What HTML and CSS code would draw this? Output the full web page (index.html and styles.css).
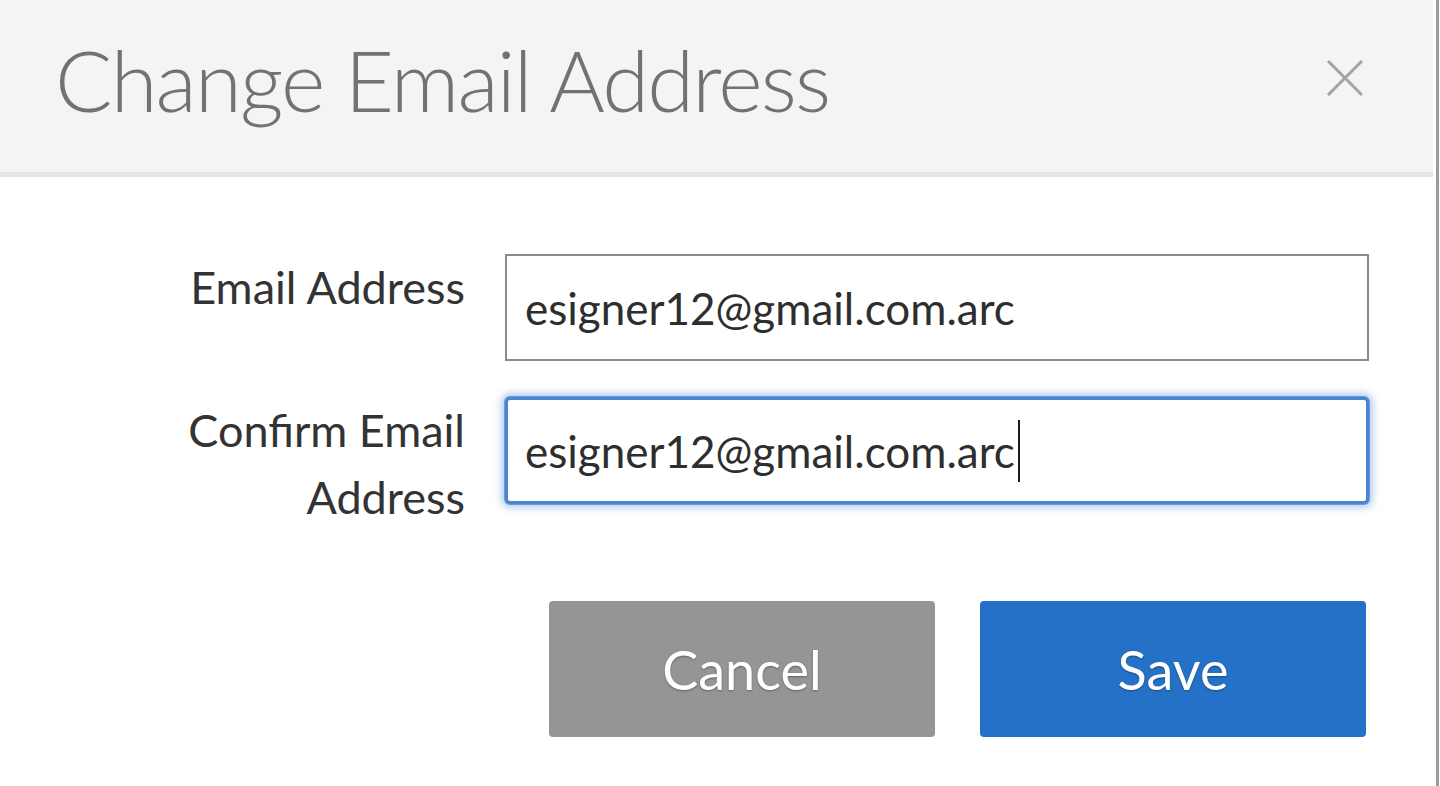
FILE: index.html
```html
<!DOCTYPE html>
<html lang="en">
<head>
<meta charset="utf-8">
<title>Change Email Address</title>
<link rel="stylesheet" href="styles.css">
</head>
<body>
<div class="dialog">
  <header class="dialog-header">
    <h1 class="dialog-title">Change Email Address</h1>
    <button class="close-btn" aria-label="Close">
      <svg viewBox="0 0 36 36" width="36" height="36" aria-hidden="true">
        <path d="M1 1 L35 35 M35 1 L1 35" stroke="#a3a3a3" stroke-width="3" fill="none"/>
      </svg>
    </button>
  </header>
  <div class="dialog-body">
    <div class="form-grid">
      <label class="field-label">Email Address</label>
      <div class="field">esigner12@gmail.com.arc</div>
      <label class="field-label">Confirm Email<br>Address</label>
      <div class="field field-focus">esigner12@gmail.com.arc<span class="caret"></span></div>
    </div>
    <div class="actions">
      <button class="btn btn-cancel">Cancel</button>
      <button class="btn btn-save">Save</button>
    </div>
  </div>
</div>
</body>
</html>
```
FILE: styles.css
```css
html, body {
  margin: 0;
  padding: 0;
  background: #ffffff;
}
body {
  width: 1440px;
  height: 786px;
  overflow: hidden;
  font-family: Lato, "Open Sans", "Liberation Sans", sans-serif;
}
.dialog {
  width: 1436px;
  height: 786px;
  border-right: 3px solid #9c9c9c;
  background: #fff;
  display: flex;
  flex-direction: column;
}
.dialog-header {
  height: 177px;
  box-sizing: border-box;
  margin-right: 3px;
  background: #f4f4f4;
  border-bottom: 5px solid #e4e4e4;
  display: flex;
  justify-content: space-between;
  align-items: flex-start;
  padding: 29px 70px 0 55px;
  flex-shrink: 0;
}
.dialog-title {
  margin: 0;
  font-family: Lato, "Open Sans", sans-serif;
  font-weight: 300;
  font-size: 85px;
  line-height: 100px;
  color: #727272;
  letter-spacing: -1.8px;
}
.close-btn {
  margin-top: 31px;
  width: 36px;
  height: 36px;
  padding: 0;
  border: 0;
  background: transparent;
  display: flex;
}
.dialog-body {
  display: flex;
  flex-direction: column;
  padding-top: 77px;
}
.form-grid {
  display: grid;
  grid-template-columns: 465px 864px;
  column-gap: 40px;
  row-gap: 36px;
  align-items: start;
}
.field-label {
  text-align: right;
  font-size: 45px;
  line-height: 67px;
  color: #333333;
}
.field {
  height: 107px;
  box-sizing: border-box;
  border: 2px solid #8a8a8a;
  padding: 0 18px;
  font-size: 44px;
  color: #2e2e2e;
  display: flex;
  align-items: center;
  background: #fff;
}
.field-focus {
  border: 3px solid #4a85d0;
  padding-left: 17px;
  border-radius: 5px;
  box-shadow: 0 0 0 1px #6a9ad9, 0 0 7px 4px rgba(110, 160, 225, 0.5);
}
.caret {
  display: inline-block;
  width: 2px;
  height: 62px;
  margin-left: 3px;
  background: #1a1a1a;
}
.actions {
  display: flex;
  gap: 45px;
  padding-left: 549px;
  margin-top: 70px;
}
.btn {
  width: 386px;
  height: 136px;
  border: 0;
  border-radius: 4px;
  font-family: Lato, "Open Sans", sans-serif;
  font-size: 54px;
  color: #ffffff;
  text-shadow: 0 1px 2px rgba(0, 0, 0, 0.35);
  padding: 0;
}
.btn-cancel {
  background: #959595;
}
.btn-save {
  background: #2472c8;
}
```
